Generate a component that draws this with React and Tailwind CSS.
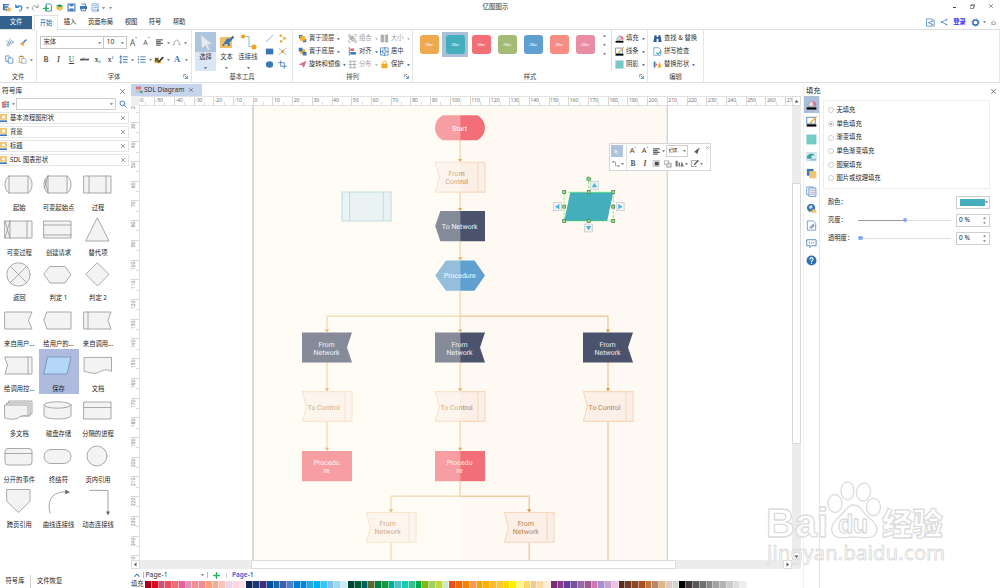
import React from "react";

const cx = (...a) => a.filter(Boolean).join(" ");

/* ---------- small helpers ---------- */
function Svg({ w = 10, h = 10, vb, className = "", children }) {
  return (
    <svg width={w} height={h} viewBox={vb || `0 0 ${w} ${h}`} className={cx("block shrink-0", className)} fill="none" strokeLinecap="round" strokeLinejoin="round">
      {children}
    </svg>
  );
}
function Caret({ color = "#666", className = "" }) {
  return (
    <Svg w={3} h={2} className={className}>
      <path d="M0 0.2H3L1.5 1.9Z" fill={color} />
    </Svg>
  );
}
function Close({ s = 5, color = "#555" }) {
  return (
    <Svg w={s} h={s} vb="0 0 5 5">
      <path d="M0.5 0.5L4.5 4.5M4.5 0.5L0.5 4.5" stroke={color} strokeWidth="0.75" />
    </Svg>
  );
}

const B = "#3b76b5";
const icons = {
  undo: <path d="M1 1V4.2H4.2M1.3 4C3 1.6 8.6 1.4 8.6 5C8.6 7 7.4 8 6 8.6" stroke="#2b86d6" strokeWidth="1.5" />,
  redo: <path d="M9 1.2V4.2H6M8.7 4C7 1.6 1.6 1.6 1.6 5C1.6 6.6 2.4 7.6 3.4 8.2" stroke="#9a9a9a" strokeWidth="1.1" />,
  logo: <g><path d="M1 1H8V2.6H3V3.6H7V5.2H3V6.4H6V8H1Z" fill={B} /><path d="M6 5H9.5V9.3H4.5V7.6H6.5Z" fill="#eeb04c" /></g>,
  newdoc: <g><path d="M4 1H8L9.4 2.5V9H4Z" stroke={B} strokeWidth="0.9" /><path d="M0.6 6H6M3.3 3.4V8.8" stroke="#1fb25a" strokeWidth="1.5" /></g>,
  open: <g><path d="M1 3L5 1.5L9 3.4L6 5Z" fill="#1f9d55" /><path d="M1.5 3.5L5 4.6V8.6L2 6.6Z" fill="#f1a92b" /><path d="M5.4 4.8L8.8 4L7.8 7.4L5.4 8.8Z" fill="#f3c043" /></g>,
  save: <g><rect x="1.2" y="1.2" width="7.6" height="7.6" stroke={B} strokeWidth="1.2" /><path d="M3 1.5H7V3.6H3ZM2.6 6H7.4V8.6H2.6Z" fill={B} /></g>,
  print: <g><rect x="1" y="3.4" width="8" height="3.6" rx="0.6" fill={B} /><path d="M2.8 1.2H7.2V3M2.8 6H7.2V8.8H2.8Z" stroke={B} strokeWidth="0.9" fill="#dce8f4" /></g>,
  preview: <g><path d="M1.6 1H8V9H1.6Z" stroke="#6c9ccb" strokeWidth="0.9" /><path d="M3 3H6.6M3 5H6.6M3 7H5" stroke="#6c9ccb" strokeWidth="0.8" /><path d="M6 6L9 8.4L7.6 9.4Z" fill={B} /></g>,
  cut: <g stroke="#6a9bcb" strokeWidth="0.9"><path d="M1 2.6L5.4 6M5.6 1L3.4 6.2M5.6 6L6.4 6.2" stroke="#8fa3b8" /><circle cx="7.4" cy="4.6" r="1.5" /><circle cx="3.6" cy="7.6" r="1.4" /></g>,
  brush: <g><path d="M8.8 1.2L5.8 4.2" stroke={B} strokeWidth="1.8" /><path d="M2 4.6L5 3.8L6.6 5.6L5.4 8.6L3.6 8L1.6 5.4Z" fill="#eea63a" /></g>,
  copy: <g stroke="#5289c0" strokeWidth="0.9" fill="#fff"><path d="M1.2 1H4.6L5.8 2.2V7H1.2Z" /><path d="M4 3.2H7.4L8.8 4.6V9H4Z" /></g>,
  paste: <g><path d="M1.4 1.8H6.2V8.2H1.4Z" stroke="#eeb455" strokeWidth="1.2" /><path d="M2.8 0.8H5V2H2.8Z" fill="#777" /><path d="M4.6 4H7.6L9 5.3V9.2H4.6Z" fill="#fff" stroke="#7a9cc0" strokeWidth="0.8" /></g>,
  align: <path d="M1.2 2H8.8M1.2 4H6.4M1.2 6H8.8M1.2 8H6.4" stroke="#666" strokeWidth="1.3" strokeLinecap="butt" />,
  arc: <path d="M1 7.4H2.4C2.6 3.2 4 2.4 5.2 2.4C6.8 2.4 7.8 3.8 8 7.4H9.4" stroke="#888" strokeWidth="0.8" />,
  spacing: <g stroke={B} strokeWidth="1"><path d="M2 1V9M0.8 2.4L2 1L3.2 2.4M0.8 7.6L2 9L3.2 7.6" /><path d="M5 2H9.2M5 5H9.2M5 8H9.2" /></g>,
  list: <g stroke="#4a7fb6" strokeWidth="1"><path d="M4 2H9.2M4 5H9.2M4 8H9.2" /><path d="M1.4 2H1.8M1.4 5H1.8M1.4 8H1.8" strokeWidth="1.4" /></g>,
  hilite: <g><path d="M0.6 5.4H7V8.2H0.6Z" fill="#f1b42d" /><path d="M4.6 7L8.8 2.6" stroke="#333" strokeWidth="1.6" /><path d="M0.8 2.8H4.6V6.6H0.8Z" fill="#6a5a2c" /></g>,
  line: <path d="M1.2 8.8L8.8 1.2" stroke="#6e9ac8" strokeWidth="0.8" />,
  rect: <rect x="1" y="1.8" width="8.2" height="6.4" fill={B} />,
  ellipse: <ellipse cx="5" cy="5" rx="4" ry="3.6" fill={B} />,
  curve: <g><path d="M3 1.8L7.6 4.8L3.6 8" stroke="#eebd70" strokeWidth="0.8" /><circle cx="3" cy="1.8" r="1.3" fill="#eea020" /><circle cx="7.4" cy="4.8" r="1.3" fill="#eea020" /><circle cx="3.4" cy="8.2" r="1.3" fill="#eea020" /></g>,
  cross: <g><path d="M1 1.4L9 8.6M9 1.4L1 8.6" stroke="#7d9dc0" strokeWidth="0.8" /><circle cx="5" cy="5" r="1.6" fill="#eea020" /></g>,
  crop: <path d="M3 0.8V7H9.4M0.8 3H7V9.2" stroke={B} strokeWidth="0.9" />,
  front: <g><path d="M1 1H5V5H1ZM5.4 5.6H9.2V9.2H5.4Z" fill={B} /><path d="M2.4 2.4H8V7.6H2.4Z" fill="#f2b233" /></g>,
  back: <g><path d="M2.4 2.4H8V7.6H2.4Z" fill="#f2b233" /><path d="M0.8 0.8H5V5H0.8ZM5.2 5.4H9.4V9.4H5.2Z" fill={B} /></g>,
  rotate: <path d="M9.4 0.8L6.4 9L4.8 5.8L0.6 5Z" fill="#e0668b" />,
  group: <g stroke="#9a9a9a" strokeWidth="0.8"><path d="M0.8 2.6V0.8H2.6M7.4 0.8H9.2V2.6M0.8 7.4V9.2H2.6M9.2 7.4V9.2H7.4" /><rect x="2.4" y="2.4" width="3.4" height="3.4" fill="#bbb" /><rect x="4.6" y="4.6" width="3" height="3" fill="#ddd" /></g>,
  alignL: <g><path d="M1.4 0.8V9.2" stroke={B} strokeWidth="0.9" /><path d="M2.6 1.6H6.8V4.4H2.6Z" fill="#e35d75" /><path d="M2.6 5.6H8.8V8.4H2.6Z" fill={B} /></g>,
  dist: <path d="M1 1.4H9M1 8.6H9M3 1.4V8.6M7 1.4V8.6M1 5H9" stroke="#a5a5a5" strokeWidth="0.9" />,
  size: <path d="M1.4 1H4V9H1.4ZM6 1H8.6V9H6Z" fill="#a8a8a8" stroke="#999" strokeWidth="0.5" />,
  center: <g stroke={B} strokeWidth="0.8"><rect x="1" y="1" width="8" height="8" /><rect x="3.4" y="3.4" width="3.2" height="3.2" /><path d="M5 0.6V2.4M5 7.6V9.4M0.6 5H2.4M7.6 5H9.4" /></g>,
  lock: <g><rect x="1.6" y="4.2" width="6.8" height="5" rx="0.5" fill="#f2ab26" /><path d="M3 4V2.8C3 0.6 7 0.6 7 2.8V4" stroke="#f2ab26" strokeWidth="1.1" /></g>,
  fill: <g><path d="M2 4.6L5 1.4L8 4.2L5.6 7H2.8Z" fill="#d9d9d9" stroke="#8a8a8a" strokeWidth="0.6" /><path d="M6.4 2.4C9 2.6 9.6 4.6 8.4 7L7.4 5Z" fill="#ec5f93" stroke="#ec5f93" strokeWidth="0.7" /><path d="M0.6 7.6H9.4V9.6H0.6Z" fill="#000" /></g>,
  stroke: <g><rect x="1" y="1.2" width="7.4" height="6" stroke="#4a7fb6" strokeWidth="0.8" fill="#fff" /><path d="M4 6.4L9.2 0.8" stroke="#eea63a" strokeWidth="1.3" /><path d="M0.6 7.6H9.4V9.6H0.6Z" fill="#000" /></g>,
  shadow: <rect x="0.8" y="0.8" width="8.4" height="8.4" fill="#74ccc9" stroke="#59b7b5" strokeWidth="0.4" />,
  find: <g fill="#2e5c94"><path d="M1.8 1.4H4V3.4H6V1.4H8.2L9.6 9H6V5.4H4V9H0.4Z" /></g>,
  spell: <g><path d="M1.4 0.8H6.2L8.6 3V9.2H1.4Z" stroke="#6a9bcb" strokeWidth="0.9" /><path d="M4 6.4L5.6 8L8.8 4.8" stroke="#29a9a0" strokeWidth="1.2" /></g>,
  replace: <g><path d="M0.8 1.6H2.6V8.4H0.8Z" fill={B} /><path d="M2.8 3L5 5L2.8 7Z" fill="#e35d75" /><path d="M7.4 2L9.6 8.4H5Z" fill="#f2ab26" /></g>,
  image: <g><rect x="0.8" y="1.4" width="8.6" height="7.4" fill="#d6e8f5" stroke="#b9cfe0" strokeWidth="0.5" /><path d="M1 7V4.6L3.4 2.6H6.6L7.6 4H5V7Z" fill="#39a39d" /><path d="M5 7H9V8.6H3Z" fill="#8fb9d8" /></g>,
  layers: <g><path d="M0.8 0.8H6.8V7H0.8Z" fill={B} /><path d="M3 2.8H9.4V9.4H3Z" fill="#efc275" /></g>,
  note: <g><path d="M1 0.8H6.4V8H1Z" stroke="#6a9bcb" strokeWidth="0.8" fill="#fff" /><path d="M3 1.8H9V9.4H3Z" stroke="#6a9bcb" strokeWidth="0.9" fill="#fff" /><path d="M4.2 3.8H7.8M4.2 5.6H7.8M4.2 7.4H7.8" stroke="#8d86b5" strokeWidth="0.7" /></g>,
  globe: <g><circle cx="4.6" cy="4.4" r="3.8" fill={B} /><path d="M2.6 3.2L5 1.8L6 4.2L3.8 5.6Z" fill="#cfe2f2" /><path d="M4.6 8H9M6 6.8H8.6" stroke="#efc275" strokeWidth="1.6" /></g>,
  attach: <g><path d="M1.6 0.8H6.6L8.8 3V9.2H1.6Z" stroke="#6a9bcb" strokeWidth="0.8" /><path d="M3.4 7.2L6.8 3.8M5 7.4L7.4 5" stroke="#6a9bcb" strokeWidth="1" /></g>,
  comment: <g><path d="M1 1.6H9.2V7H5L3.4 8.8V7H1Z" stroke="#5d8fc3" strokeWidth="0.9" /><path d="M3.2 4.4H3.3M5.1 4.4H5.2M7 4.4H7.1" stroke={B} strokeWidth="1.1" /></g>,
  help: <g><circle cx="5" cy="5" r="4.5" fill="#2f6fb2" /><path d="M3.6 3.8C3.6 1.9 6.5 2 6.4 3.9C6.3 4.9 5 4.9 5 6.1M5 7.6V7.7" stroke="#fff" strokeWidth="1" /></g>,
  shareDoc: <g stroke={B} strokeWidth="0.8"><path d="M1 1H5.8L9 2.6V9H1Z" /><path d="M6.6 3.6L3.4 5.2L6.6 7" /><path d="M6.6 3.6V3.7M3.4 5.2V5.3M6.6 7V7.1" strokeWidth="1.6" /></g>,
  share: <g stroke={B}><path d="M8.4 2L2 5L8.4 8.2" strokeWidth="0.9" /><path d="M8.2 2V2.1M2 5V5.1M8.2 8.1V8.2" strokeWidth="1.8" /></g>,
  gear: <g><circle cx="5" cy="5" r="2.9" stroke={B} strokeWidth="1.7" /><circle cx="5" cy="5" r="4" stroke={B} strokeWidth="1" strokeDasharray="1.3 1.84" strokeLinecap="butt" /></g>,
  search: <g stroke="#3f83c8" strokeWidth="1.2"><circle cx="4.2" cy="4.2" r="2.9" /><path d="M6.4 6.4L9 9" /></g>,
  lib: <g><path d="M4 1.6H9V8H3Z" fill="#4a8fd0" /><path d="M1 2.4L4 1.4V8.8L1 8Z" fill="#e0574f" /><path d="M0.8 4.4L9 3.8M0.8 6.4L9 6M6.4 1.6V8.4" stroke="#fff" strokeWidth="0.5" /><path d="M4.4 0.8H6.4V3.4H4.4Z" fill="#f2b233" /></g>,
  doc: <g><path d="M1 0.6H7.6V4H1Z" fill="#d9737f" /><path d="M4 4.6H6.8V6.6H4Z" fill="#f2b233" /><path d="M6.4 5.8H9.6V9H6.4Z" fill="#4aa0a8" /><path d="M2 4V8H6" stroke="#aaa" strokeWidth="0.6" /></g>,
  pointer: <path d="M2.6 1L8 6.2L5.6 6.4L6.8 9L5.6 9.4L4.6 6.9L2.8 8.4Z" fill="#dde3ea" stroke="#a4b0bf" strokeWidth="0.4" />,
  conn: <g><path d="M1.2 2.4H4.4V7.4H8" stroke="#777" strokeWidth="0.8" /><path d="M0.6 1.4H2V3.2H0.6ZM7.6 6.6H9.2V8.4H7.6Z" fill="#777" /></g>,
  frontG: <g><rect x="1.6" y="1.6" width="6.6" height="6.6" stroke="#999" strokeWidth="0.6" /><rect x="3" y="3" width="4.4" height="4.2" fill="#4a4a4a" /></g>,
  backG: <g stroke="#8a8a8a" strokeWidth="0.8"><rect x="1" y="1" width="5" height="5" /><rect x="4" y="4" width="5" height="5" fill="#ddd" /></g>,
  replG: <g fill="#777"><path d="M0.6 2H3V8.4H0.6ZM4 4H5.6V8.4H4ZM7.6 2.4L9.8 8.4H6Z" /></g>,
  penG: <g><path d="M7 8.4H1.6V1.8H8" stroke="#888" strokeWidth="0.8" /><path d="M5 6L9 2" stroke="#444" strokeWidth="1.4" /></g>,
  brushG: <path d="M8.8 0.6L6.6 4.8L5.4 9L3.6 7.2L1.4 6.2L5 3.2Z" fill="#555" />,
};
const Ic = ({ n, s = 10, className }) => <Svg w={s} h={s} vb="0 0 10 10" className={className}>{icons[n]}</Svg>;

/* fixed-width centring slot */
const Slot = ({ w, children }) => <div className={cx("flex h-full shrink-0 items-center justify-center", w)}>{children}</div>;

/* ---------- title bar ---------- */
function TitleBar() {
  return (
    <div className="flex h-[15px] shrink-0 items-center">
      <div className="flex h-full flex-1 items-center pl-px">
        <Slot w="w-[11px]"><Ic n="logo" s={9} /></Slot>
        <Slot w="w-[13px]"><Ic n="undo" s={8} /></Slot>
        <Slot w="w-[4px]"><Caret /></Slot>
        <Slot w="w-[12px]"><Ic n="redo" s={8} /></Slot>
        <Slot w="w-[12px]"><Ic n="newdoc" s={9} /></Slot>
        <Slot w="w-[12px]"><Ic n="open" s={9} /></Slot>
        <Slot w="w-[12px]"><Ic n="save" s={9} /></Slot>
        <Slot w="w-[12px]"><Ic n="print" s={9} /></Slot>
        <Slot w="w-[12px]"><Ic n="preview" s={9} /></Slot>
        <Slot w="w-[5px]"><Caret /></Slot>
        <Slot w="w-[8px]"><Caret /></Slot>
      </div>
      <div className="pr-[3px] text-[6.5px] leading-none text-[#333]">亿图图示</div>
      <div className="-mt-[3px] flex h-full flex-1 items-center justify-end gap-[14px] pr-[7px]">
        <div className="mt-[3px] h-px w-[3px] bg-[#444]" />
        <Svg w={5} h={5}><path d="M1.5 1.2V0.4H4.6V3H3.7M0.4 1.6H3.6V4.5H0.4Z" stroke="#444" strokeWidth="0.6" /></Svg>
        <Close s={4} />
      </div>
    </div>
  );
}

const menuTabs = [
  ["插入", "w-[24px]"],
  ["页面布局", "w-[37px]"],
  ["视图", "w-[24px]"],
  ["符号", "w-[24px]"],
  ["帮助", "w-[24px]"],
];
function MenuRow() {
  return (
    <div className="flex h-[14px] shrink-0 items-end text-[6.3px] leading-none text-[#222]">
      <div className="mr-[2px] flex h-[13px] w-[32px] items-center justify-center bg-[#33628f] text-white">文件</div>
      <div className="z-10 -mb-px flex h-[15px] w-[24px] items-center justify-center border-x border-t border-[#e2e2e2] bg-white pt-px text-[#2b5a8c]">开始</div>
      {menuTabs.map(([t, w]) => (
        <div key={t} className={cx("flex h-[13px] items-center justify-center", w)}>{t}</div>
      ))}
      <div className="flex h-[14px] flex-1 items-center justify-end">
        <Slot w="w-[13px]"><Ic n="shareDoc" s={9} /></Slot>
        <Slot w="w-[13px]"><Ic n="share" s={8} /></Slot>
        <div className="w-[19px] text-center font-bold text-[#3a36ff]">登录</div>
        <Slot w="w-[13px]"><Ic n="gear" s={9} /></Slot>
        <Slot w="w-[5px]"><Caret /></Slot>
        <Slot w="w-[13px]"><Svg w={5} h={5}><path d="M0.5 2.6L2.5 0.8L4.5 2.6M1 4.4V2.6M4 4.4V2.6M1 4.4H4" stroke="#777" strokeWidth="0.6" /></Svg></Slot>
      </div>
    </div>
  );
}

/* ---------- ribbon ---------- */
function Group({ w, label, launcher, children }) {
  return (
    <div className={cx("relative flex h-full shrink-0 flex-col border-r border-[#e4e4e4]", w)}>
      <div className="flex h-[42px]">{children}</div>
      <div className="flex h-[10px] items-center justify-center text-[6.3px] leading-none text-[#444]">{label}</div>
      {launcher && (
        <Svg w={5} h={5} className="absolute bottom-[3px] right-[3px]"><path d="M0.5 3V0.5H3" stroke="#777" strokeWidth="0.6" /><path d="M1.8 1.8L4.4 4.4M4.4 2V4.4H2" stroke="#3b76b5" strokeWidth="0.8" /></Svg>
      )}
    </div>
  );
}
const Glyph = ({ c = "text-[7.5px] font-bold text-[#555]", children }) => <span className={cx("font-['Liberation_Serif',serif] leading-none", c)}>{children}</span>;

function FontGroup() {
  return (
    <Group w="w-[155px]" label="字体" launcher>
      <div className="flex flex-col pl-[3px] pt-[6px] text-[6.3px] leading-none text-[#333]">
        <div className="flex h-[13px] items-center">
          <div className="flex h-[13px] w-[64px] items-center justify-between border border-[#c6c6c6] px-[2.5px]">宋体<Caret /></div>
          <div className="-ml-px flex h-[13px] w-[24px] items-center justify-between border border-[#c6c6c6] px-[2.5px] text-[6.8px]">10<Caret /></div>
          <Slot w="w-[13px]"><span className="text-[8px] text-[#555]">A</span><span className="-mt-1.5 text-[5px]">ˆ</span></Slot>
          <Slot w="w-[13px]"><span className="text-[7px] text-[#555]">A</span><span className="-mt-1.5 text-[5px]">ˇ</span></Slot>
          <Slot w="w-[13px]"><Ic n="align" s={9} /></Slot>
          <Slot w="w-[4px]"><Caret /></Slot>
          <Slot w="w-[13px]"><Ic n="arc" s={9} /></Slot>
          <Slot w="w-[4px]"><Caret /></Slot>
        </div>
        <div className="mt-[4px] flex h-[13px] items-center">
          <Slot w="w-[12px]"><Glyph>B</Glyph></Slot>
          <Slot w="w-[13px]"><Glyph c="text-[7.5px] font-bold italic text-[#555]">I</Glyph></Slot>
          <Slot w="w-[13px]"><Glyph c="text-[7.5px] text-[#444] underline">U</Glyph></Slot>
          <Slot w="w-[13px]"><Glyph c="text-[6.5px] text-[#555] line-through">abc</Glyph></Slot>
          <Slot w="w-[13px]"><Glyph>x</Glyph><Glyph c="mt-1 text-[4px] font-bold text-[#3b76b5]">2</Glyph></Slot>
          <Slot w="w-[13px]"><Glyph>x</Glyph><Glyph c="-mt-1 text-[4px] font-bold text-[#3b76b5]">2</Glyph></Slot>
          <Slot w="w-[13px]"><Ic n="spacing" s={9} /></Slot>
          <Slot w="w-[4px]"><Caret /></Slot>
          <Slot w="w-[14px]"><Ic n="list" s={9} /></Slot>
          <Slot w="w-[4px]"><Caret /></Slot>
          <Slot w="w-[14px]"><Ic n="hilite" s={10} /></Slot>
          <Slot w="w-[4px]"><Caret /></Slot>
          <Slot w="w-[14px]"><Glyph c="text-[8.5px] font-bold text-[#3b76b5]">A</Glyph></Slot>
          <Slot w="w-[4px]"><Caret /></Slot>
        </div>
      </div>
    </Group>
  );
}

function BigTool({ w, label, active, children }) {
  return (
    <div className={cx("flex h-[39px] flex-col items-center text-[6.3px] leading-none text-[#333]", w, active && "bg-[#dbe6f5]")}>
      <div className={cx("flex h-[20px] w-full items-center justify-center", active && "bg-[#aec5de]")}>{children}</div>
      <div className="flex h-[11px] items-center whitespace-nowrap">{label}</div>
      <Caret className="mt-[4px]" color="#35567a" />
    </div>
  );
}
function ToolsGroup() {
  return (
    <Group w="w-[101px]" label="基本工具">
      <div className="flex pl-[3px] pt-[2px]">
        <BigTool w="w-[21px]" label="选择" active><Svg w={14} h={17}><path d="M2 1L13 10L8.4 10.6L11 15.4L9 16.4L6.6 11.4L3 14.6Z" fill="#e6eaef" stroke="#b9c3cf" strokeWidth="0.5" /></Svg></BigTool>
        <BigTool w="w-[21px]" label="文本"><Svg w={16} h={16}><path d="M1 3H13V14H1Z" fill="#f3bf62" /><path d="M3 12L8 4.5H10L11 12H8.8V10H6L5 12Z" fill="#3b76b5" /><path d="M9 6.5L14 1.5L15 3.5L11 8Z" fill="#2f6fb2" /></Svg></BigTool>
        <BigTool w="w-[22px]" label="连接线"><Svg w={17} h={16}><path d="M3 2.5H9V12.5H13" stroke="#8fb0d3" strokeWidth="0.9" /><circle cx="3" cy="2.6" r="2.1" fill="#f0a41c" /><circle cx="14" cy="13" r="2.5" fill="#f0a41c" /></Svg></BigTool>
        <div className="ml-[4px] grid h-[39px] grid-cols-[13px_13px] place-items-center">
          {["line", "curve", "rect", "cross", "ellipse", "crop"].map((n) => <Ic key={n} n={n} s={9} />)}
        </div>
      </div>
    </Group>
  );
}

function MiniCmd({ n, label, dim, caret = true }) {
  return (
    <div className={cx("flex h-[13px] items-center text-[6.3px] leading-none whitespace-nowrap", dim ? "text-[#a0a0a0]" : "text-[#333]")}>
      <Ic n={n} s={9} />
      <span className="ml-[2px]">{label}</span>
      {caret && <Caret className="ml-[3px]" color={dim ? "#aaa" : "#35567a"} />}
    </div>
  );
}
const swatches = ["bg-[#f0a94f]", "bg-[#44aebc]", "bg-[#f26f78]", "bg-[#a3bb74]", "bg-[#5fa0d0]", "bg-[#f78c82]", "bg-[#e98da2]"];

function Ribbon() {
  return (
    <div className="flex h-[54px] shrink-0 border-y border-[#dedede] bg-white">
      <Group w="w-[37px]" label="文件">
        <div className="grid h-[38px] grid-cols-[13px_13px_5px] items-center justify-items-center pl-[3px] pt-[4px]">
          <Ic n="cut" s={9} /><Ic n="brush" s={8} /><span />
          <Ic n="copy" s={9} /><Ic n="paste" s={9} /><Caret />
        </div>
      </Group>
      <FontGroup />
      <ToolsGroup />
      <Group w="w-[120px]" label="排列" launcher>
        <div className="grid grid-cols-[50px_32px_33px] content-start pl-[5px] pt-[2px]">
          <MiniCmd n="front" label="置于顶层" /><MiniCmd n="group" label="组合" dim /><MiniCmd n="size" label="大小" dim />
          <MiniCmd n="back" label="置于底层" /><MiniCmd n="alignL" label="对齐" /><MiniCmd n="center" label="居中" caret={false} />
          <MiniCmd n="rotate" label="旋转和镜像" /><MiniCmd n="dist" label="分布" dim /><MiniCmd n="lock" label="保护" />
        </div>
      </Group>
      <Group w="w-[235px]" label="样式" launcher>
        <div className="flex pl-[3px] pt-[2px]">
          {swatches.map((c, i) => (
            <div key={c} className={cx("flex h-[25px] w-[26px] items-center justify-center", i === 1 && "bg-[#a9bfda]")}>
              <div className={cx("flex size-[19px] items-center justify-center rounded-[3px] font-['Liberation_Serif',serif] text-[5px] font-bold leading-none text-white/80", c)}>Abc</div>
            </div>
          ))}
        </div>
        <div className="flex h-[27px] w-[13px] flex-col items-center justify-between pt-[5px] pb-[2px]">
          <Caret className="rotate-180" color="#666" /><Caret color="#666" /><Caret color="#666" />
        </div>
        <div className="h-[41px] border-l border-[#dedede] pl-[3px] pt-[2px]">
          <MiniCmd n="fill" label="填充" /><MiniCmd n="stroke" label="线条" /><MiniCmd n="shadow" label="阴影" />
        </div>
      </Group>
      <Group w="w-[56px]" label="编辑">
        <div className="pl-[5px] pt-[2px]">
          <MiniCmd n="find" label="查找 & 替换" caret={false} /><MiniCmd n="spell" label="拼写检查" caret={false} /><MiniCmd n="replace" label="替换形状" />
        </div>
      </Group>
      <div className="flex-1 border-r border-[#e8e8e8]" />
    </div>
  );
}

/* ---------- symbol library ---------- */
const S = { stroke: "#959595", strokeWidth: 0.8, fill: "#f3f3f3" };
const symbols = [
  ["起始", <g {...S}><path d="M5 5H24C29.4 8 29.4 19 24 22H5C-0.4 19 -0.4 8 5 5ZM5 5V22M24 5V22" /></g>],
  ["可变起始点", <g {...S}><path d="M5 5H24C29.4 8 29.4 19 24 22H5C-0.4 19 -0.4 8 5 5ZM5 5V22M24 5V22M5 5L1.5 17M2 9L5 22" /></g>],
  ["过程", <g {...S}><path d="M1 5H28V22H1ZM6 5V22M23 5V22" /></g>],
  ["可变过程", <g {...S}><path d="M1 5H28V22H1ZM6 5V22M23 5V22M1 5L6 22M6 5L1 22" /></g>],
  ["创建请求", <g {...S}><path d="M1 5H28V22H1ZM1 9H28M1 19H28" /></g>],
  ["替代项", <g {...S}><path d="M14.5 2L26 25H3Z" /></g>],
  ["返回", <g {...S}><circle cx="14.5" cy="13.5" r="11.7" /><path d="M6.5 5.5L22.5 21.5M22.5 5.5L6.5 21.5" /></g>],
  ["判定 1", <g {...S}><path d="M7 5.5H22L28 13.5L22 22H7L1 13.5Z" /></g>],
  ["判定 2", <g {...S}><path d="M14.5 2L26 13.5L14.5 25L3 13.5Z" /></g>],
  ["来自用户...", <g {...S}><path d="M1 5H28L24.5 13.5L28 22H1Z" /></g>],
  ["给用户的...", <g {...S}><path d="M4 5H28V22H4L1 13.5Z" /></g>],
  ["来自调用...", <g {...S}><path d="M1 5H28L25 13.5L28 22H1ZM5 5V22" /></g>],
  ["给调用控...", <g {...S}><path d="M1 5H28V22H1L3.5 13.5ZM24 5V22" /></g>],
  ["保存", <g><path d="M5 5H28L24 22H1Z" fill="#b5d7f7" stroke="#6d8fb8" strokeWidth="0.8" /></g>],
  ["文档", <g {...S}><path d="M1 4H28V18C22 15 19 17 15 19C10 21 6 19 1 18Z" transform="translate(0.5 1.4)" /></g>],
  ["多文档", <g {...S}><path d="M5 4H28V17H5Z" /><path d="M3 6H26V19H3Z" /><path d="M1 8H24V19C19 18 17 19 13 21.5C8 23 5 22 1 21Z" /></g>],
  ["磁盘存储", <g {...S}><path d="M1 8V19C4 23 25 23 28 19V8" /><ellipse cx="14.5" cy="8" rx="13.5" ry="3.2" /></g>],
  ["分隔的进程", <g {...S}><path d="M1 5H28V22H1ZM1 10.5H28" /></g>],
  ["分开的事件", <g {...S}><rect x="1" y="5.5" width="27" height="16.5" rx="3" /><path d="M1 10.5H28" /></g>],
  ["终结符", <g {...S}><rect x="1" y="6.5" width="27" height="14" rx="7" /></g>],
  ["页内引用", <g {...S}><circle cx="14" cy="13" r="10" /></g>],
  ["跨页引用", <g {...S}><path d="M3 1.5H26V13.5L14.5 24.5L3 13.5Z" /></g>],
  ["曲线连接线", <g><path d="M7 25C4 14 8 3 24 4" stroke="#8b8b8b" strokeWidth="0.8" /><path d="M22.5 1.6L27 4.4L22 6Z" fill="#666" /></g>],
  ["动态连接线", <g><path d="M7 2.4H25V24" stroke="#8b8b8b" strokeWidth="0.8" /><path d="M23 23.6H27L25 27.6Z" fill="#666" /></g>],
];

function Library() {
  return (
    <div className="flex w-[129px] shrink-0 flex-col text-[6.3px] leading-none text-[#1c1c1c]">
      <div className="flex h-[15px] items-center justify-between pl-[2px] pr-[4px] pt-px text-[6.8px]">符号库<Close /></div>
      <div className="flex h-[12px] items-center">
        <Slot w="w-[10px]"><Ic n="lib" s={9} /></Slot>
        <Slot w="w-[6px]"><Caret /></Slot>
        <div className="flex h-[12px] w-[100px] items-center justify-end border border-[#cfcfcf] pr-[2.5px]"><Caret /></div>
        <Slot w="w-[13px]"><Ic n="search" s={8} /></Slot>
      </div>
      <div className="mt-px flex flex-col">
        {["基本流程图形状", "背景", "标题", "SDL 图表形状"].map((t) => (
          <div key={t} className="flex h-[14px] items-center py-px">
            <div className="flex h-[12px] w-full items-center border border-l-0 border-[#e6e6e6] pr-[3px]">
              <Svg w={7} h={8}><path d="M0 0H7V5.8H0Z" fill="#f2c679" /><circle cx="3.5" cy="3" r="1.6" fill="#fff" /><path d="M0 6.4H7V8H0Z" fill="#3b76b5" /></Svg>
              <span className="ml-[3px] flex-1">{t}</span>
              <Close s={4} />
            </div>
          </div>
        ))}
      </div>
      <div className="mt-[0.6px] grid w-[118px] grid-cols-[39px_39.5px_39.5px] auto-rows-[45.3px]">
        {symbols.map(([t, g], i) => (
          <div key={t} className={cx("flex flex-col items-center", i === 13 && "bg-[#aebbdf]")}>
            <Svg w={29} h={28} vb="0 0 29 28" className="mr-[2px] mt-[3.2px]">{g}</Svg>
            <div className="mt-[6px] mr-[0.5px] whitespace-nowrap text-[6.3px]">{t}</div>
          </div>
        ))}
      </div>
      <div className="flex-1" />
      <div className="flex h-[13px] items-center">
        <div className="flex h-[13px] w-[31px] items-center justify-center border-r border-[#cfcfcf]">符号库</div>
        <span className="ml-[6px]">文件恢复</span>
      </div>
    </div>
  );
}

/* ---------- rulers ---------- */
const hMarks = Array.from({ length: 34 }, (_, i) => (i - 6) * 10);
const vMarks = Array.from({ length: 24 }, (_, i) => (i + 2) * 10);
function HRuler() {
  return (
    <div className="flex h-[10px] w-[652px] overflow-hidden border-y border-[#e2e2e2] bg-white">
      <div className="-ml-[5.6px] flex">
        {hMarks.map((m) => (
          <div key={m} className="flex h-[9px] w-[19.72px] shrink-0 items-start border-l border-[#d5d5d5]">
            <span className="w-[9.3px] pl-[0.5px] pt-px text-[5.3px] leading-none tracking-tight text-[#777]">{m}</span>
            <span className="mt-[5px] h-[4px] w-px bg-[#ddd]" />
          </div>
        ))}
      </div>
    </div>
  );
}
function VRuler() {
  return (
    <div className="flex h-[454px] w-[9px] shrink-0 flex-col overflow-hidden border-r border-[#e2e2e2] bg-white">
      <div className="-mt-[4.2px] flex flex-col">
        {vMarks.map((m) => (
          <div key={m} className="flex h-[19.72px] shrink-0 flex-col items-end border-t border-[#d5d5d5]">
            <span className="h-[9.3px] w-[8px] rotate-180 pb-[0.5px] text-right text-[5.3px] leading-none tracking-tight text-[#777] [writing-mode:vertical-rl]">{m}</span>
            <span className="h-px w-[3px] shrink-0 bg-[#ddd]" />
          </div>
        ))}
      </div>
    </div>
  );
}

/* ---------- diagram ---------- */
const lineC = "#edcda2";
function Flow({ d, tip }) {
  return (
    <g>
      <path d={d} stroke={lineC} strokeWidth="1.4" />
      {tip && <path d={`M${tip[0] - 2.1} ${tip[1] - 3.2}H${tip[0] + 2.1}L${tip[0]} ${tip[1]}Z`} fill="#d9993c" />}
    </g>
  );
}
function Label({ x, y, lines, fill }) {
  return (
    <g fill={fill} fontFamily="Roboto, 'Liberation Sans', sans-serif" fontSize="7" textAnchor="middle" textRendering="geometricPrecision">
      {lines.map((l, i) => <text key={i} x={x} y={y + i * 8.3}>{l}</text>)}
    </g>
  );
}
function Control({ x, y, lines }) {
  return (
    <g>
      <path d={`M${x} ${y}H${x + 49.6}V${y + 29.8}H${x}L${x + 4} ${y + 15}ZM${x + 42.6} ${y}V${y + 29.8}`} fill="#fcefe7" stroke="#f8d8ba" strokeWidth="1.1" />
      <Label x={x + 21.3} y={lines.length > 1 ? y + 13.4 : y + 18} lines={lines} fill="#b5834f" />
    </g>
  );
}
function FromNet({ x }) {
  return (
    <g>
      <path d={`M${x} 332.4H${x + 50}L${x + 45} 347.5L${x + 50} 362.6H${x}Z`} fill="#4b526b" />
      <Label x={x + 24.6} y={346.8} lines={["From", "Network"]} fill="#e9ebf2" />
    </g>
  );
}
function NavBtn({ x, y, d }) {
  return (
    <g transform={`translate(${x} ${y})`}>
      <rect x="-4" y="-4" width="8" height="8" fill="#f0f0f0" stroke="#c8c8c8" strokeWidth="0.7" />
      <path d={d} fill="#3fb4e6" />
    </g>
  );
}
function Diagram() {
  return (
    <svg width="652" height="454" viewBox="140 106 652 454" className="block" fill="none">
      <rect x="252" y="106" width="416" height="454" fill="#d8d8d4" />
      <rect x="254" y="106" width="412.5" height="454" fill="#fff9f3" />
      <path d="M342 192H391V221H342ZM349.6 192V221M383.3 192V221" fill="#e0ecf2" stroke="#9fd0d6" strokeWidth="1.1" />
      <Flow d="M460 140V160" tip={[460, 162.3]} />
      <Flow d="M460 192V208" tip={[460, 211.3]} />
      <Flow d="M460 241V258" tip={[460, 260.5]} />
      <Flow d="M460 291V330" tip={[460, 332.6]} />
      <Flow d="M460 316.3H327V330" tip={[327, 332.6]} />
      <Flow d="M460 316.3H608V330" tip={[608, 332.6]} />
      {[327, 460, 608].map((x) => <Flow key={x} d={`M${x} 362V389`} tip={[x, 391.5]} />)}
      {[327, 460].map((x) => <Flow key={x} d={`M${x} 421V448`} tip={[x, 451]} />)}
      <Flow d="M608 421V560" />
      <Flow d="M460 481V496.2H391V510" tip={[391, 512.4]} />
      <Flow d="M460 496.2H529.2V510" tip={[529.2, 512.4]} />
      <Flow d="M391 542V560" />
      <Flow d="M529.2 542V560" />

      <path d="M443 115.3H477C487.6 120 487.6 135.5 477 140.2H443C432.4 135.5 432.4 120 443 115.3Z" fill="#f26f78" />
      <Label x={459.6} y={130.8} lines={["Start"]} fill="#fff" />
      <Control x={435.3} y={162.3} lines={["From", "Control"]} />
      <path d="M440.4 211H485V241.2H440.4L435.2 226Z" fill="#4b526b" />
      <Label x={459.7} y={229.3} lines={["To Network"]} fill="#f1f2f6" />
      <path d="M446 260.5H474.5L485 275.6L474.5 290.8H446L435.2 275.6Z" fill="#5fa0d0" />
      <Label x={459.8} y={278.2} lines={["Procedure"]} fill="#f3f8fc" />
      <FromNet x={302} /><FromNet x={435} /><FromNet x={583} />
      <Control x={302.4} y={391.6} lines={["To Control"]} />
      <Control x={435.3} y={391.6} lines={["To Control"]} />
      <Control x={583.4} y={391.6} lines={["To Control"]} />
      {[302, 435].map((x) => (
        <g key={x}>
          <rect x={x} y="451" width="50" height="30.2" fill="#f26f78" />
          <Label x={x + 24.6} y={464.5} lines={["Procedu", "re"]} fill="#ffe9ea" />
        </g>
      ))}
      <Control x={366.4} y={512.5} lines={["From", "Network"]} />
      <Control x={504.5} y={512.5} lines={["From", "Network"]} />
      <rect x="254" y="106" width="206.4" height="454" fill="#fffef8" fillOpacity="0.33" />

      <path d="M570.3 192.2H613.3L607.2 221H564.2Z" fill="#44aebc" />
      <path d="M564.2 192.2H613.3V221H564.2ZM588.7 192V180" stroke="#5cf04c" strokeWidth="0.8" strokeDasharray="2.4 1.4" />
      <circle cx="588.7" cy="179" r="2.1" fill="#7fd07a" stroke="#5b9058" strokeWidth="0.7" />
      {[[564.2, 192], [588.7, 192], [613.2, 192], [564.2, 206.6], [613.2, 206.6], [564.2, 221], [588.7, 221], [613.2, 221]].map(([x, y]) => (
        <rect key={`${x}-${y}`} x={x - 1.5} y={y - 1.5} width="3" height="3" fill="#9bdc94" stroke="#4a7a48" strokeWidth="0.7" />
      ))}
      <NavBtn x={594.5} y={185.3} d="M-2.6 1.9H2.6L0 -2.3Z" />
      <NavBtn x={557.4} y={206.7} d="M1.9 -2.6V2.6L-2.3 0Z" />
      <NavBtn x={620.2} y={206.7} d="M-1.9 -2.6V2.6L2.3 0Z" />
      <NavBtn x={588.6} y={228} d="M-2.6 -1.9H2.6L0 2.3Z" />
    </svg>
  );
}

function FloatingBar() {
  return (
    <div className="absolute left-[469px] top-[37px] flex h-[28px] w-[102px] border border-[#d6d6d6] bg-white text-[7.5px] leading-none text-[#444]">
      <div className="flex w-[17px] flex-col items-center border-r border-[#e2e2e2] pt-px">
        <div className="-ml-[3px] flex h-[12px] w-[12px] items-center justify-center bg-[#aec3dd]"><Ic n="pointer" s={9} /></div>
        <div className="flex h-[13px] items-center gap-px"><Ic n="conn" s={8} /><Caret /></div>
      </div>
      <div className="flex w-[62px] flex-col pt-px">
        <div className="flex h-[12px] items-center">
          <Slot w="w-[12px]">A<span className="-mt-1 text-[4.5px]">ˆ</span></Slot>
          <Slot w="w-[12px]">A<span className="-mt-1 text-[4.5px]">ˇ</span></Slot>
          <Slot w="w-[10px]"><Ic n="align" s={9} /></Slot>
          <Slot w="w-[4px]"><Caret /></Slot>
          <div className="ml-px flex h-[12px] w-[22px] items-center justify-between border border-[#cfcfcf] px-[1.5px]">
            <div className="flex w-[9px] justify-end overflow-hidden whitespace-nowrap text-[5.5px]">宋体</div><Caret />
          </div>
        </div>
        <div className="flex h-[13px] items-center">
          <Slot w="w-[12px]"><Glyph>B</Glyph></Slot>
          <Slot w="w-[12px]"><Glyph c="text-[7.5px] font-bold italic text-[#555]">I</Glyph></Slot>
          <Slot w="w-[11px]"><Ic n="frontG" s={9} /></Slot>
          <Slot w="w-[11px]"><Ic n="backG" s={8} /></Slot>
          <Slot w="w-[12px]"><Ic n="replG" s={9} /></Slot>
          <Caret className="shrink-0" />
        </div>
      </div>
      <div className="flex w-[15px] shrink-0 flex-col items-center pt-px">
        <div className="flex h-[12px] items-center"><Ic n="brushG" s={8} /></div>
        <div className="flex h-[13px] items-center gap-px"><Ic n="penG" s={9} /><Caret /></div>
      </div>
      <div className="flex flex-1 flex-col items-center gap-[4px] pt-[1.5px]">
        <Close s={3} color="#777" />
        <Svg w={2} h={9}><path d="M1 0.5V9" stroke="#aaa" strokeWidth="0.7" strokeDasharray="0.8 1.6" strokeLinecap="butt" /></Svg>
      </div>
    </div>
  );
}

/* ---------- colour strip ---------- */
const palette = "a80016 d90d1b c9527a e94f5f ee6d77 e8609c e093b5 f09090 f28b94 ffa07a efb09a f8c4b8 ecd5e8 ffd5e0 ffe0e4 10265a 1d3674 3d2d7a 0050a0 1868a8 3f5fae 5080c8 0080d0 0088dd 29a8e0 00b0f0 30c8ff 85c0ea a0d8ef cdeaf5 004530 005a35 006060 556b2f 008040 159a40 00b0a0 50c0c0 1accb0 35c08a 00a850 80b812 a0d060 c0d840 cce8c8 e8501e f06a00 f58200 f59a50 f0a500 ffb000 ffb930 ffc833 ffd800 fff000 fff58a ffd570 ebcc98 fcd9a5 fdecd5 7a2d78 8a3a88 643c98 76529c 9868a8 a05a90 d078b0 a890d0 c8a4cc ecc4e0 5a2c1c 703a2c 904820 a85020 c07840 b88868 e0b888 d8ccc4 ccd8d0 000000 403838 585858 707070 888888 a0a4a0 b4b4b4 cccccc dddddd eeeeee".split(" ");

const ArrowBtn = ({ d, w = "h-[10px] w-[9px]" }) => (
  <div className={cx("flex shrink-0 items-center justify-center border border-[#dcdcdc] bg-white", w)}>
    <Svg w={5} h={5}><path d={d} fill="#555" /></Svg>
  </div>
);

function Workspace() {
  return (
    <div className="ml-[2px] flex w-[670px] shrink-0 flex-col">
      <div className="flex h-[13px]">
        <div className="mt-px flex h-[12px] w-[71px] items-center bg-[#c6d4ee] pl-[4px] text-[6.6px] leading-none text-[#333]">
          <Ic n="doc" s={8} />
          <span className="ml-[1px] flex-1 whitespace-nowrap">SDL Diagram</span>
          <div className="mr-[9px]"><Close s={4} /></div>
        </div>
      </div>
      <div className="flex">
        <div className="h-[10px] w-[9px] bg-[#f0f0f0]" />
        <HRuler />
        <ArrowBtn d="M0.5 3.5H4.5L2.5 1Z" />
      </div>
      <div className="flex h-[454px]">
        <VRuler />
        <div className="relative w-[652px] overflow-hidden bg-white">
          <Diagram />
          <FloatingBar />
        </div>
        <div className="flex w-[9px] flex-col bg-[#ececec]">
          <div className="h-[77px]" />
          <div className="h-[261px] border border-[#d8d8d8] bg-white" />
          <div className="flex-1" />
          <ArrowBtn d="M0.5 1.5H4.5L2.5 4Z" w="h-[8px] w-[9px]" />
        </div>
      </div>
      <div className="flex h-[9px] w-[670px] bg-[#ececec]">
        <ArrowBtn d="M3.5 0.5V4.5L1 2.5Z" w="h-[9px] w-[9px]" />
        <div className="w-[111px]" />
        <div className="w-[425px] border border-[#dcdcdc] bg-white" />
        <div className="w-[107px]" />
        <ArrowBtn d="M1.5 0.5V4.5L4 2.5Z" w="h-[9px] w-[9px]" />
      </div>
      <div className="flex h-[11px] items-center pt-px text-[6.5px] leading-none text-[#333]">
        <Slot w="w-[12px]"><Svg w={6} h={4}><path d="M0.8 3.4L3 1L5.2 3.4" stroke="#3b76b5" strokeWidth="1.1" /></Svg></Slot>
        <div className="flex h-[6px] w-[65px] items-center justify-between border-x border-[#bbb] pl-[1.5px] pr-[3px] text-[6.8px]">Page-1<Caret /></div>
        <Slot w="w-[17px]"><Svg w={7} h={7}><path d="M3.5 0.8V6.2M0.8 3.5H6.2" stroke="#1fb25a" strokeWidth="1.4" /></Svg></Slot>
        <div className="ml-px h-[5px] w-px bg-[#ccc]" />
        <span className="ml-[5px] font-semibold text-[#3458d0]">Page-1</span>
      </div>
      <div className="flex h-[8px] items-center text-[6.3px] leading-none text-[#333]">
        <span className="w-[14px] shrink-0 whitespace-nowrap">填充</span>
        {palette.map((c, i) => (
          <div key={i} className="h-[7px] w-[6.78px] shrink-0 border-r border-white/50" style={{ backgroundColor: `#${c}` }} />
        ))}
      </div>
    </div>
  );
}

/* ---------- fill panel ---------- */
function Spin() {
  return (
    <div className="flex h-[13px] w-[34px] items-center justify-between border border-[#cfcfcf] pl-[2px] pr-[3px] text-[6.5px]">
      0 %
      <div className="flex flex-col gap-[3px]"><Caret className="rotate-180" color="#777" /><Caret color="#777" /></div>
    </div>
  );
}
function Slider({ label, value }) {
  return (
    <div className="flex h-[18px] items-center">
      <span className="w-[30px]">{label}</span>
      <div className="flex w-[93px] items-center">
        <div className="h-px bg-[#999]" style={{ width: `${value}%` }} />
        <div className="size-[4.5px] shrink-0 rounded-full bg-[#7fa6ff]" />
        <div className="h-px flex-1 bg-[#ddd]" />
      </div>
      <div className="ml-[5px]"><Spin /></div>
    </div>
  );
}
function FillPanel() {
  return (
    <div className="ml-[2px] flex flex-1 flex-col border-l border-[#f0f0f0] text-[6.3px] leading-none text-[#222]">
      <div className="flex h-[13px] items-center justify-between pl-[2px] pr-[4px] pt-[3px] text-[7.3px]">填充<Close /></div>
      <div className="flex flex-1">
        <div className="flex w-[16px] flex-col items-center border-r border-[#e6e6e6]">
          {["fill", "stroke", "shadow", "image", "layers", "note", "globe", "attach", "comment", "help"].map((n, i) => (
            <div key={n} className={cx("flex h-[17.3px] w-full items-center justify-center", i === 0 && "bg-[#a9bfda]")}><Ic n={n} s={11} /></div>
          ))}
        </div>
        <div className="flex flex-1 flex-col pl-[3px] pt-[4px]">
          <div className="h-[89px] w-[167px] border border-[#ececec] pl-[4px] pt-[2.6px]">
            {["无填充", "单色填充", "渐变填充", "单色渐变填充", "图案填充", "图片或纹理填充"].map((t, i) => (
              <div key={t} className="flex h-[13.6px] items-center">
                <div className="flex size-[6px] items-center justify-center rounded-full border border-[#d0d0d0]">
                  {i === 1 && <div className="size-[2.5px] rounded-full bg-[#999]" />}
                </div>
                <span className="ml-[2.5px]">{t}</span>
              </div>
            ))}
          </div>
          <div className="ml-[5px] mt-[4px]">
            <div className="flex h-[18px] items-center">
              <span className="w-[128px]">颜色：</span>
              <div className="flex h-[13px] w-[34px] items-center justify-between border border-[#cfcfcf] pl-[2.5px] pr-[1px]">
                <div className="h-[7px] w-[25px] bg-[#44aebc]" /><Caret />
              </div>
            </div>
            <Slider label="亮度：" value={48} />
            <Slider label="透明度：" value={0} />
          </div>
        </div>
      </div>
    </div>
  );
}

function Watermark() {
  return (
    <svg width="190" height="92" viewBox="760 478 190 92" className="pointer-events-none absolute left-[760px] top-[478px]" fill="#fff" fillOpacity="0.7" stroke="#dcdcdc" strokeWidth="1.3" strokeLinejoin="round">
      <text x="766" y="537" fontSize="40" fontWeight="bold" fontFamily="'Liberation Sans', sans-serif" textLength="62" lengthAdjust="spacingAndGlyphs">Bai</text>
      <text x="882" y="534.5" fontSize="31" fontWeight="900" fontFamily="'Noto Sans CJK SC', sans-serif" textLength="61" lengthAdjust="spacingAndGlyphs">经验</text>
      <text x="767" y="560" fontSize="20" fontFamily="'Noto Sans', sans-serif" textLength="178" strokeWidth="0.9">jingyan.baidu.com</text>
      <ellipse cx="835" cy="503.5" rx="7" ry="9" />
      <ellipse cx="847.5" cy="490.8" rx="6.5" ry="9" />
      <ellipse cx="863.5" cy="492" rx="7" ry="9" transform="rotate(12 863.5 492)" />
      <ellipse cx="873.5" cy="507" rx="7" ry="8.6" />
      <path d="M853.5 505C861 505 862 512 868 517C875 522 879 527 876 533C873 540 862 537 854 537C846 537 837 540 833 534C829 527 834 521 840 516C846 511 847 505 853.5 505Z" />
      <text x="838" y="533" fontSize="25" fontWeight="bold" fontFamily="'Liberation Sans', sans-serif" textLength="30">du</text>
    </svg>
  );
}

export default function App() {
  return (
    <div className="relative flex h-[588px] w-[1000px] flex-col overflow-hidden bg-white font-['Noto_Sans','Noto_Sans_CJK_SC',sans-serif]">
      <TitleBar />
      <MenuRow />
      <Ribbon />
      <div className="flex flex-1">
        <Library />
        <Workspace />
        <FillPanel />
      </div>
      <Watermark />
    </div>
  );
}
